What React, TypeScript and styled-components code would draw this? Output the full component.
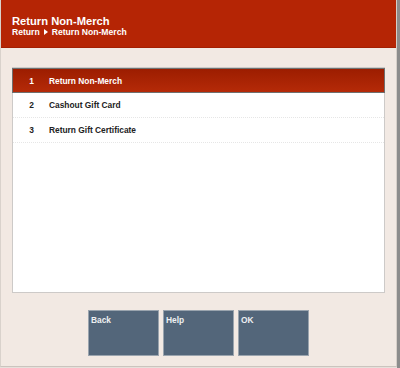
import React from "react";
import styled, { createGlobalStyle } from "styled-components";

const Global = createGlobalStyle`
  html, body { margin: 0; padding: 0; width: 400px; height: 368px; overflow: hidden; background: #e6e0db; }
  * { box-sizing: border-box; }
  body { font-family: "Liberation Sans", Arial, sans-serif; }
`;

const Frame = styled.div`
  display: flex;
  width: 400px;
  height: 368px;
`;

const Window = styled.div`
  width: 397px;
  height: 367px;
  display: flex;
  flex-direction: column;
  background: #f2e9e3;
  border-left: 1px solid #d9d2cc;
  border-right: 1px solid #d6cfc9;
  border-bottom: 1px solid #cbc4be;
`;

const Strip = styled.div`
  width: 3px;
  background: #8c8c8c;
`;

const Header = styled.header`
  height: 48px;
  background: #b52505;
  border-bottom: 1px solid #a31f03;
  padding: 15px 0 0 11px;
  color: #fff;
  display: flex;
  flex-direction: column;
`;

const Title = styled.div`
  font-size: 11.2px;
  font-weight: bold;
  line-height: 12px;
`;

const Crumbs = styled.div`
  font-size: 8.6px;
  font-weight: bold;
  line-height: 10px;
  display: flex;
  align-items: center;
  gap: 3px;
`;

const Arrow = styled.span`
  display: inline-block;
  width: 0;
  height: 0;
  border-top: 3px solid transparent;
  border-bottom: 3px solid transparent;
  border-left: 4px solid #fff;
  margin: 0 1px;
`;

const Content = styled.div`
  flex: 1;
  display: flex;
  flex-direction: column;
  padding: 19px 11px 0 11px;
`;

const Panel = styled.div`
  height: 226px;
  background: #fff;
  border: 1px solid #cdcac8;
  display: flex;
  flex-direction: column;
`;

const Row = styled.div<{ $selected?: boolean }>`
  height: 25px;
  flex: none;
  display: flex;
  align-items: center;
  font-size: 8.4px;
  font-weight: bold;
  color: ${(p) => (p.$selected ? "#fff" : "#222")};
  background: ${(p) =>
    p.$selected ? "linear-gradient(#9c1d00, #b52a08)" : "#fff"};
  border: ${(p) => (p.$selected ? "1px solid #6f6f6f" : "none")};
  border-bottom: ${(p) =>
    p.$selected ? "1px solid #6f6f6f" : "1px dotted #e6e6e6"};
  margin: ${(p) => (p.$selected ? "0 -1px" : "0")};
`;

const Num = styled.span`
  width: 36px;
  text-align: center;
  padding-left: 1px;
`;

const Buttons = styled.div`
  display: flex;
  justify-content: center;
  gap: 4px;
  margin-top: 17px;
`;

const Button = styled.button`
  width: 71px;
  height: 46px;
  background: #53667a;
  border: 1px solid #9aa4ae;
  color: #eef0f2;
  font-family: "Liberation Sans", Arial, sans-serif;
  font-size: 8.4px;
  font-weight: bold;
  text-align: left;
  padding: 4px 2px;
  display: flex;
  align-items: flex-start;
`;

const items = ["Return Non-Merch", "Cashout Gift Card", "Return Gift Certificate"];

export default function App() {
  return (
    <Frame>
      <Global />
      <Window>
        <Header>
          <Title>Return Non-Merch</Title>
          <Crumbs>
            <span>Return</span>
            <Arrow />
            <span>Return Non-Merch</span>
          </Crumbs>
        </Header>
        <Content>
          <Panel>
            {items.map((label, i) => (
              <Row key={label} $selected={i === 0}>
                <Num>{i + 1}</Num>
                <span>{label}</span>
              </Row>
            ))}
          </Panel>
          <Buttons>
            <Button>Back</Button>
            <Button>Help</Button>
            <Button>OK</Button>
          </Buttons>
        </Content>
      </Window>
      <Strip />
    </Frame>
  );
}
